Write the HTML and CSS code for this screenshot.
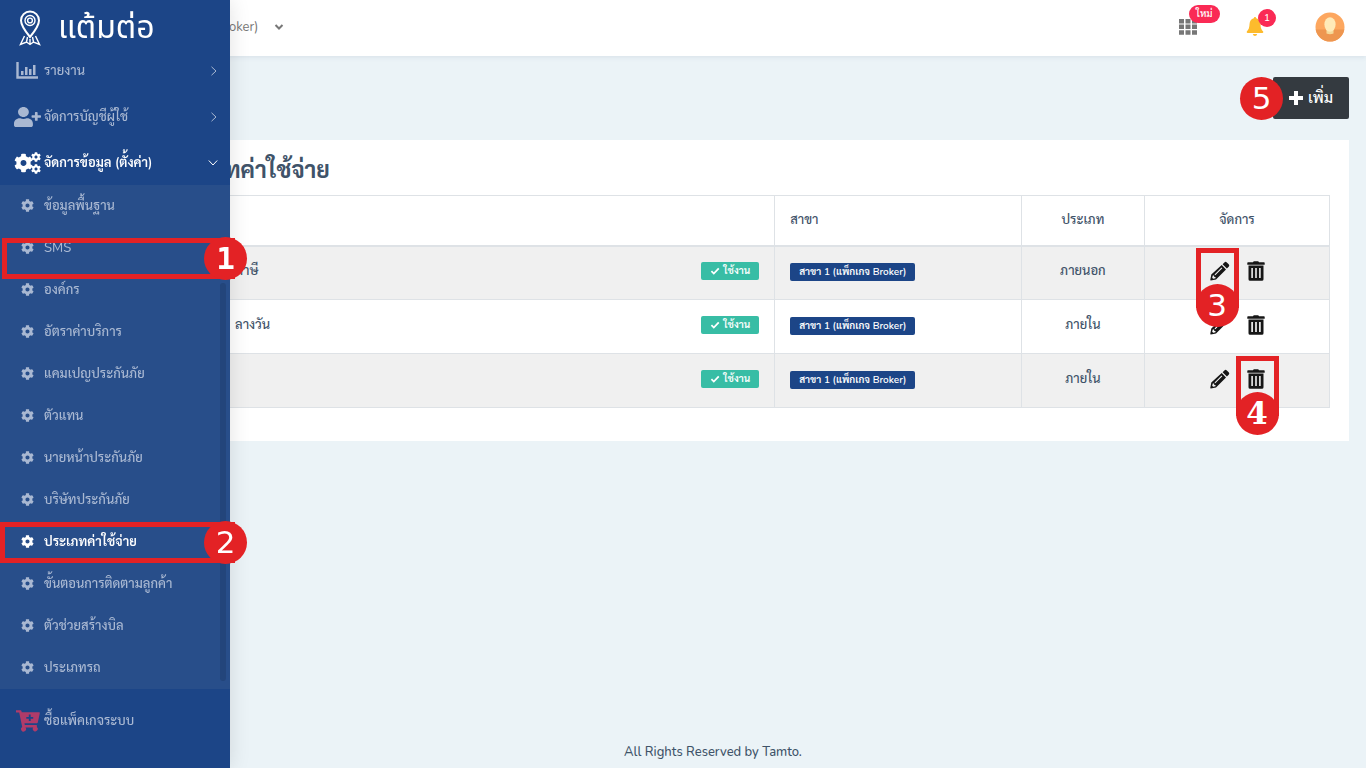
FILE: index.html
```html
<!DOCTYPE html>
<html lang="th">
<head>
<meta charset="utf-8">
<title>ประเภทค่าใช้จ่าย</title>
<link rel="stylesheet" href="styles.css">
</head>
<body>
<svg class="defs" aria-hidden="true">
  <symbol id="cog" viewBox="0 0 512 512"><path d="M487.4 315.7l-42.6-24.6c4.3-23.2 4.3-47 0-70.2l42.6-24.6c4.9-2.8 7.1-8.6 5.5-14-11.1-35.6-30-67.8-54.7-94.6-3.8-4.1-10-5.1-14.8-2.3L380.8 110c-17.9-15.4-38.5-27.3-60.8-35.1V25.8c0-5.6-3.9-10.5-9.4-11.7-36.7-8.2-74.3-7.8-109.2 0-5.5 1.2-9.4 6.1-9.4 11.7V75c-22.2 7.9-42.8 19.8-60.8 35.1L88.7 85.5c-4.9-2.8-11-1.9-14.8 2.3-24.7 26.7-43.6 58.9-54.7 94.6-1.7 5.4.6 11.2 5.5 14L67.3 221c-4.3 23.2-4.3 47 0 70.2l-42.6 24.6c-4.9 2.8-7.1 8.6-5.5 14 11.1 35.6 30 67.8 54.7 94.6 3.8 4.1 10 5.1 14.8 2.3l42.6-24.6c17.9 15.4 38.5 27.3 60.8 35.1v49.2c0 5.6 3.9 10.5 9.4 11.7 36.7 8.2 74.3 7.8 109.2 0 5.5-1.2 9.4-6.1 9.4-11.7v-49.2c22.2-7.9 42.8-19.8 60.8-35.1l42.6 24.6c4.9 2.8 11 1.9 14.8-2.3 24.7-26.7 43.6-58.9 54.7-94.6 1.5-5.5-.7-11.3-5.6-14.1zM256 336c-44.1 0-80-35.9-80-80s35.9-80 80-80 80 35.9 80 80-35.9 80-80 80z"/></symbol>
  <symbol id="pencil" viewBox="0 0 20 20"><path fill-rule="evenodd" d="M14.4 1.4q1.2-1.2 2.4 0l1.900 1.900q1.200 1.200 0 2.400l-1.800 1.800-4.300-4.300zM11.700 4.100l4.300 4.300L6 18.400.8 19.400q-.6 0-.5-.7l1-5.100zM11.500 6.400l-7 7 .8.8 7-7zM2.800 14.600l-.6 2.200 1 1 2.300-.6v-1.300H4.200v-1.300z"/></symbol>
  <symbol id="trash" viewBox="0 0 18 20"><path fill-rule="evenodd" d="M6 1.200Q6.300.3 7.200.3h3.600q.9 0 1.200.9h5q.7 0 .7.700v1.800H.3V1.900q0-.7.700-.7zM1.500 4.600h15v13.600q0 1.600-1.600 1.600H3.100q-1.600 0-1.600-1.600zM4.300 7v10h1.600V7zM8.200 7v10h1.600V7zM12.100 7v10h1.600V7z"/></symbol>
  <symbol id="check" viewBox="0 0 12 10"><path d="M1.500 5.200l3 3L10.700 1.700" fill="none" stroke="currentColor" stroke-width="2.200"/></symbol>
  <symbol id="next" viewBox="0 0 8 10"><path d="M1.500 .8L6 5 1.500 9.200" fill="none" stroke="currentColor"/></symbol>
</svg>

<header class="topbar">
  <button class="branch-switch" type="button">oker)
    <svg width="10" height="8" viewBox="0 0 10 8"><path d="M1.500 2L5 5.500 8.500 2" fill="none" stroke="currentColor" stroke-width="2"/></svg>
  </button>
  <div class="tools">
    <button class="tool tool-apps" type="button" aria-label="แอป">
      <svg width="18" height="16" viewBox="0 0 18 16"><path d="M0 0h5v4.500H0zM6.500 0h5v4.500h-5zM13 0h5v4.500h-5zM0 5.600h5v4.500H0zM6.500 5.600h5v4.500h-5zM13 5.600h5v4.500h-5zM0 11.200h5v4.500H0zM6.500 11.200h5v4.500h-5zM13 11.200h5v4.500h-5z"/></svg>
      <span class="pill">ใหม่</span>
    </button>
    <button class="tool tool-bell" type="button" aria-label="การแจ้งเตือน">
      <svg width="18" height="20" viewBox="0 0 18 20"><path d="M9 0q1.200 0 1.200 1.300 4 1 4.300 6 0 5 2.700 7.200.5 1.300-.8 1.500H1.600Q.3 15.800.8 14.500 3.500 12 3.500 7.300q.3-5 4.300-6Q7.800 0 9 0zM6.800 17h4.400Q10.800 19 9 19T6.800 17z"/></svg>
      <span class="pill pill-count">1</span>
    </button>
    <button class="tool tool-user" type="button" aria-label="บัญชีผู้ใช้">
      <svg width="30" height="30" viewBox="0 0 30 30"><circle cx="15" cy="15" r="14.500" fill="#fda75f"/><path d="M.7 17.500h28.600a14.500 14.500 0 0 1-28.600 0z" fill="#ee9650"/><path d="M11.500 17h7v4.500q-3.500 1.500-7 0z" fill="#f5d999"/><ellipse cx="15" cy="12.500" rx="5.600" ry="7.300" fill="#ffeab8"/></svg>
    </button>
  </div>
</header>

<main class="page">
  <div class="actions">
    <button class="add" type="button">
      <svg width="14" height="14" viewBox="0 0 14 14"><path d="M5 0h4v5h5v4H9v5H5V9H0V5h5z"/></svg>เพิ่ม
      <span class="mark mark-add">5</span>
    </button>
  </div>
  <section class="card">
    <h1 class="title">ทค่าใช้จ่าย</h1>
    <table class="list">
      <colgroup><col class="c-name"><col class="c-branch"><col class="c-type"><col class="c-manage"></colgroup>
      <thead><tr><th></th><th>สาขา</th><th class="mid">ประเภท</th><th class="mid">จัดการ</th></tr></thead>
      <tbody>
        <tr>
          <td><div class="name"><span class="label">ภาษี</span><span class="status"><svg width="10" height="8"><use href="#check"/></svg>ใช้งาน</span></div></td>
          <td><span class="branch">สาขา 1 (แพ็กเกจ Broker)</span></td>
          <td class="mid">ภายนอก</td>
          <td class="mid"><div class="row-tools"><button class="icon" type="button" aria-label="แก้ไข"><svg width="20" height="20"><use href="#pencil"/></svg><span class="frame"><span class="mark">3</span></span></button><button class="icon" type="button" aria-label="ลบ"><svg width="18" height="20"><use href="#trash"/></svg></button></div></td>
        </tr>
        <tr>
          <td><div class="name"><span class="label">ลางวัน</span><span class="status"><svg width="10" height="8"><use href="#check"/></svg>ใช้งาน</span></div></td>
          <td><span class="branch">สาขา 1 (แพ็กเกจ Broker)</span></td>
          <td class="mid">ภายใน</td>
          <td class="mid"><div class="row-tools"><button class="icon" type="button" aria-label="แก้ไข"><svg width="20" height="20"><use href="#pencil"/></svg></button><button class="icon" type="button" aria-label="ลบ"><svg width="18" height="20"><use href="#trash"/></svg></button></div></td>
        </tr>
        <tr>
          <td><div class="name"><span class="label"></span><span class="status"><svg width="10" height="8"><use href="#check"/></svg>ใช้งาน</span></div></td>
          <td><span class="branch">สาขา 1 (แพ็กเกจ Broker)</span></td>
          <td class="mid">ภายใน</td>
          <td class="mid"><div class="row-tools"><button class="icon" type="button" aria-label="แก้ไข"><svg width="20" height="20"><use href="#pencil"/></svg></button><button class="icon" type="button" aria-label="ลบ"><svg width="18" height="20"><use href="#trash"/></svg><span class="frame"><span class="mark slab">4</span></span></button></div></td>
        </tr>
      </tbody>
    </table>
  </section>
</main>
<footer class="footer">All Rights Reserved by Tamto.</footer>

<aside class="sidebar">
  <a class="brand" href="#">
    <svg width="22" height="36" viewBox="0 0 22 36"><g fill="none" stroke="currentColor" stroke-width="1.400"><path d="M11 27Q2 16 2 10.500a9 9 0 0 1 18 0Q20 16 11 27z" stroke-width="2"/><circle cx="11" cy="10.500" r="5"/><circle cx="11" cy="10.500" r="2.400"/><path d="M5.500 26L1.500 34.500l6-2.500 3.500 2.500 3.500-2.500 6 2.500-4-8.500M7.500 32l1-5M14.500 32l-1-5M11 34v-5"/></g></svg>
    <span>แต้มต่อ</span>
  </a>
  <nav>
    <a class="item" href="#"><span class="ico chart"><svg width="22" height="18" viewBox="0 0 22 18"><path d="M1.500 0v15.500H22" fill="none" stroke="currentColor" stroke-width="2.400"/><path d="M5 9h2.500v4H5zM9 5h2.500v8H9zM13 7h2.500v6H13zM17 3h2.500v10H17z"/></svg></span>รายงาน<svg class="arrow" width="8" height="10"><use href="#next"/></svg></a>
    <a class="item" href="#"><span class="ico"><svg width="27" height="20" viewBox="0 0 640 512" preserveAspectRatio="none"><path d="M624 208h-64v-64c0-8.800-7.200-16-16-16h-32c-8.800 0-16 7.200-16 16v64h-64c-8.800 0-16 7.200-16 16v32c0 8.800 7.200 16 16 16h64v64c0 8.800 7.200 16 16 16h32c8.800 0 16-7.200 16-16v-64h64c8.800 0 16-7.200 16-16v-32c0-8.800-7.200-16-16-16zm-400 48c70.700 0 128-57.300 128-128S294.700 0 224 0 96 57.300 96 128s57.300 128 128 128zm89.600 32h-16.700c-22.200 10.200-46.900 16-72.900 16s-50.600-5.800-72.900-16h-16.700C60.200 288 0 348.200 0 422.400V464c0 26.500 21.500 48 48 48h352c26.500 0 48-21.500 48-48v-41.600c0-74.200-60.200-134.400-134.400-134.400z"/></svg></span>จัดการบัญชีผู้ใช้<svg class="arrow" width="8" height="10"><use href="#next"/></svg></a>
    <a class="item on" href="#"><span class="ico"><svg width="27" height="22" viewBox="0 0 27 22"><use href="#cog" x="0" y="1" width="19" height="20"/><use href="#cog" x="17" y="0" width="10" height="10"/><use href="#cog" x="17" y="12" width="10" height="10"/></svg></span>จัดการข้อมูล (ตั้งค่า)<svg class="arrow" width="10" height="8" viewBox="0 0 10 8"><path d="M.8 1.500L5 6l4.200-4.500" fill="none" stroke="currentColor"/></svg></a>
    <div class="submenu">
      <a class="sub" href="#"><svg width="13" height="13"><use href="#cog"/></svg>ข้อมูลพื้นฐาน</a>
      <a class="sub" href="#"><svg width="13" height="13"><use href="#cog"/></svg>SMS<span class="outline outline-sms"><span class="mark mono">1</span></span></a>
      <a class="sub" href="#"><svg width="13" height="13"><use href="#cog"/></svg>องค์กร</a>
      <a class="sub" href="#"><svg width="13" height="13"><use href="#cog"/></svg>อัตราค่าบริการ</a>
      <a class="sub" href="#"><svg width="13" height="13"><use href="#cog"/></svg>แคมเปญประกันภัย</a>
      <a class="sub" href="#"><svg width="13" height="13"><use href="#cog"/></svg>ตัวแทน</a>
      <a class="sub" href="#"><svg width="13" height="13"><use href="#cog"/></svg>นายหน้าประกันภัย</a>
      <a class="sub" href="#"><svg width="13" height="13"><use href="#cog"/></svg>บริษัทประกันภัย</a>
      <a class="sub on" href="#"><svg width="13" height="13"><use href="#cog"/></svg>ประเภทค่าใช้จ่าย<span class="outline outline-type"><span class="mark">2</span></span></a>
      <a class="sub" href="#"><svg width="13" height="13"><use href="#cog"/></svg>ขั้นตอนการติดตามลูกค้า</a>
      <a class="sub" href="#"><svg width="13" height="13"><use href="#cog"/></svg>ตัวช่วยสร้างบิล</a>
      <a class="sub" href="#"><svg width="13" height="13"><use href="#cog"/></svg>ประเภทรถ</a>
      <span class="scroll"></span>
    </div>
    <a class="item buy" href="#"><span class="ico cart"><svg width="24" height="22" viewBox="0 0 24 22"><path fill-rule="evenodd" d="M0 .3h4.500q.8 0 1 .9l.2 1h17.500q.8.100.6 1l-2 9.300q-.2.800-1 .8H8.500l.3 1.700h11.500q.9.200.7 1l-.2.900a2.500 2.500 0 1 1-3.600.6H9.500a2.500 2.500 0 1 1-3.300-.6L3.200 2.400H0zM12.800 4.500v2.400h-2.500v1.800h2.500v2.400h1.900V8.700h2.500V6.900h-2.500V4.500z"/></svg></span>ซื้อแพ็คเกจระบบ</a>
  </nav>
</aside>
</body>
</html>
```
FILE: styles.css
```css
* { box-sizing: border-box; }
body {
  margin: 0;
  min-height: 100vh;
  display: flex;
  flex-direction: column;
  background: #ebf3f7;
  color: #3f5369;
  font-family: "Nunito", "Sarabun", "Noto Sans Thai Looped", "Loma", "Noto Sans", sans-serif;
  font-size: 13px;
  font-weight: 500;
  line-height: 20px;
}
button { border: 0; background: none; padding: 0; font: inherit; color: inherit; cursor: pointer; }
a { color: inherit; text-decoration: none; }
svg { fill: currentColor; flex: none; }
.defs { position: absolute; width: 0; height: 0; }

.topbar {
  display: flex;
  justify-content: space-between;
  align-items: center;
  height: 56px;
  padding: 0 21px 2px 229px;
  background: #fff;
  box-shadow: 0 1px 5px rgba(60, 90, 120, .12);
}
.branch-switch { display: flex; align-items: center; gap: 16px; color: #777; font-weight: 400; }
.tools { display: flex; align-items: center; }
.tool { position: relative; display: flex; }
.tool-apps { color: #777; margin-right: 49px; }
.tool-bell { color: #fdbb2d; margin-right: 51px; }
.pill {
  position: absolute;
  left: 10px;
  bottom: 12px;
  height: 18px;
  padding: 0 7px;
  border-radius: 9px;
  background: #fa2a55;
  color: #fff;
  font-size: 10px;
  line-height: 18px;
  white-space: nowrap;
}
.pill-count { left: 12px; bottom: 10px; width: 18px; padding: 0; text-align: center; }

.page { padding: 21px 17px 0 77px; }
.actions { display: flex; justify-content: flex-end; }
.add {
  position: relative;
  display: flex;
  align-items: center;
  gap: 5px;
  height: 42px;
  padding: 0 16px;
  border-radius: 2px;
  background: #343a40;
  color: #fff;
  font-size: 15px;
}
.card { margin-top: 21px; padding: 16px 19px 33px; background: #fff; }
.title { margin: 0 0 9px; padding-left: 129px; font-size: 23px; line-height: 30px; font-weight: 700; }

.list { width: 100%; table-layout: fixed; border-collapse: collapse; }
.c-name { width: 55%; }
.c-branch { width: 20%; }
.c-type { width: 10%; }
.c-manage { width: 15%; }
.list th, .list td { padding: 0 15px; border: 1px solid #dee2e6; text-align: left; font-weight: 500; }
.list th { height: 50px; border-bottom-width: 2px; }
.list td { height: 54px; padding-bottom: 3px; }
.list .mid { text-align: center; }
.list tbody tr:nth-child(odd) { background: #f0f0f0; }
.name { display: flex; justify-content: space-between; align-items: center; padding-left: 123px; }
.label { white-space: nowrap; }
.status, .branch { display: inline-flex; align-items: center; height: 18px; padding: 0 9px; border-radius: 2px; color: #fff; font-size: 10px; font-weight: 600; white-space: nowrap; }
.status { gap: 3px; background: #38bda5; }
.branch { background: #1c4587; }
.row-tools { display: flex; justify-content: center; gap: 17px; color: #161616; }
.icon { position: relative; display: flex; }

.footer { margin-top: auto; padding: 0 0 6px 60px; text-align: center; }

.sidebar {
  position: fixed;
  top: 0;
  bottom: 0;
  left: 0;
  width: 230px;
  background: #1c4587;
  color: #a9b8d2;
  box-shadow: 0 0 20px rgba(0, 0, 0, .12);
}
.brand { display: flex; align-items: center; gap: 17px; height: 47px; padding: 8px 19px 0; color: #fff; font-family: "Noto Sans Thai", "Noto Sans", sans-serif; font-size: 32px; line-height: 40px; font-weight: 400; }
.item { display: flex; align-items: center; height: 46px; padding: 2px 12px 0 14px; }
.ico { display: flex; width: 30px; }
.chart { padding-left: 2px; }
.cart { padding-left: 2px; color: #b03b69; }
.arrow { margin-left: auto; }
.item.on, .sub.on { color: #fff; font-weight: 600; }
.submenu { position: relative; background: #284e8a; }
.sub { position: relative; display: flex; align-items: center; gap: 10px; height: 42px; padding: 0 0 1px 21px; }
.scroll { position: absolute; right: 4px; top: 98px; bottom: 8px; width: 6px; border-radius: 3px; background: #23457b; }
.buy { margin-top: 8px; }

.mark {
  position: absolute;
  display: grid;
  place-items: center;
  width: 43px;
  height: 43px;
  border-radius: 50%;
  background: #e32225;
  color: #fff;
  font-family: "DejaVu Sans", sans-serif;
  font-size: 31px;
  line-height: 43px;
  font-weight: 400;
}
.mono { font-family: "DejaVu Sans Mono", monospace; font-weight: 700; }
.slab { font-family: "DejaVu Serif", serif; font-weight: 700; }
.mark-add { left: -33px; top: 0; }
.frame { position: absolute; left: 50%; top: -13px; width: 43px; height: 60px; margin-left: -24px; border: 5px solid #e32225; z-index: 1; }
.frame .mark { left: -5px; top: 31px; }
.icon:last-child .frame { margin-left: -20px; }
.outline { position: absolute; border: 5px solid #e32225; height: 41px; width: 233px; z-index: 1; }
.outline .mark { right: -17px; top: -6px; }
.outline-sms { left: 2px; top: 11px; }
.outline-type { left: 0; top: 1px; width: 235px; }
```
